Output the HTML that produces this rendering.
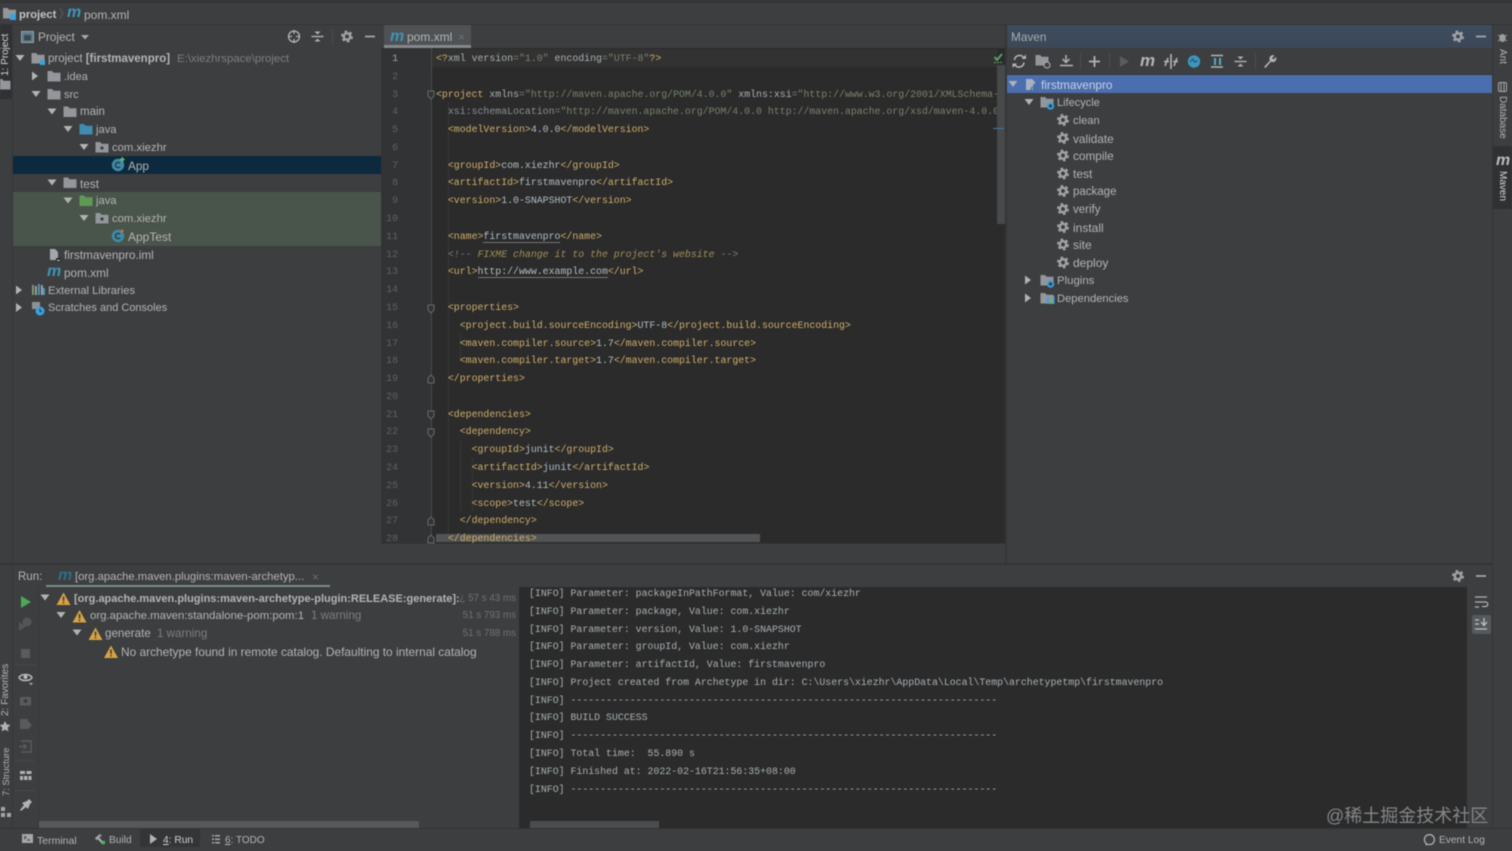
<!DOCTYPE html>
<html><head><meta charset="utf-8"><title>pom.xml</title>
<style>
html,body{margin:0;padding:0;background:#3c3e40;width:1512px;height:851px;overflow:hidden}
#r{position:absolute;left:0;top:0;width:1512px;height:851px;overflow:hidden;filter:blur(.45px);font-family:"Liberation Sans",sans-serif;font-size:11.8px;color:#b4b4b4;background:#3c3e40}
.b{position:absolute}
.t{position:absolute;white-space:pre;line-height:16px;height:16px;margin-top:.6px}
.g{color:#7c7e80}
.w{color:#d5d5d5}
.m{position:absolute;font:italic bold 16px/16px "Liberation Sans",sans-serif;color:#3f94b5;letter-spacing:-.5px}
pre{position:absolute;margin:0;font-family:"Liberation Mono",monospace;font-size:9.89px;line-height:17.78px;white-space:pre}
i{font-style:normal;color:#cfae6b}
s{text-decoration:none;color:#77836d}
u{text-decoration:none;color:#a9b0b5}
em{color:#7d7d7d}
.v{position:absolute;writing-mode:vertical-rl;white-space:pre;font-size:10px;line-height:12px}
.r180{transform:rotate(180deg)}
svg{position:absolute;left:0;top:0}
</style></head><body><div id="r">

<!-- chrome backgrounds -->
<div class="b" style="left:0;top:0;width:1512px;height:3px;background:#333537"></div>
<div class="b" style="left:0;top:24px;width:1512px;height:1px;background:#323436"></div>
<div class="b" style="left:0;top:25px;width:12px;height:74px;background:#2f3133"></div>
<div class="b" style="left:12px;top:25px;width:1px;height:803px;background:#353739"></div>

<!-- project tree -->
<div class="b" style="left:13px;top:156px;width:368px;height:18px;background:#0d293e"></div>
<div class="b" style="left:13px;top:192px;width:368px;height:54px;background:#49544a"></div>

<!-- editor -->
<div class="b" style="left:384px;top:25px;width:87px;height:20px;background:#4e5254"></div>
<div class="b" style="left:384px;top:45px;width:87px;height:3px;background:#85888a"></div>
<div class="b" style="left:381px;top:48px;width:50px;height:495px;background:#313335"></div>
<div class="b" style="left:431px;top:48px;width:575px;height:495px;background:#2b2b2b"></div>
<div class="b" style="left:431px;top:49px;width:567px;height:18px;background:#323232"></div>
<div class="b" style="left:431px;top:48px;width:1px;height:495px;background:#47494b"></div>
<div class="b" style="left:448px;top:102px;width:1px;height:441px;background:#363636"></div>
<div class="b" style="left:460px;top:332px;width:1px;height:30px;background:#363636"></div>
<div class="b" style="left:460px;top:440px;width:1px;height:72px;background:#363636"></div>
<div class="b" style="left:472px;top:458px;width:1px;height:54px;background:#363636"></div>
<div class="b" style="left:436px;top:534px;width:324px;height:8px;background:#525456"></div>
<pre style="left:381px;top:50px;width:17px;height:493px;overflow:hidden;text-align:right;color:#5f6264"><span style="color:#a4a4a4">1</span>
2
3
4
5
6
7
8
9
10
11
12
13
14
15
16
17
18
19
20
21
22
23
24
25
26
27
28</pre>
<pre style="left:436px;top:50px;width:569px;height:493px;overflow:hidden;color:#b3bcc4"><i>&lt;?</i><u>xml version</u><s>="1.0"</s> <u>encoding</u><s>="UTF-8"</s><i>?&gt;</i>

<i>&lt;project</i> <u>xmlns</u><s>="http://maven.apache.org/POM/4.0.0"</s> <u>xmlns:xsi</u><s>="http://www.w3.org/2001/XMLSchema-instance"</s>
  <u style="color:#8b9094">xsi:schemaLocation</u><s>="http://maven.apache.org/POM/4.0.0 http://maven.apache.org/xsd/maven-4.0.0.xsd"</s><i>&gt;</i>
  <i>&lt;modelVersion&gt;</i>4.0.0<i>&lt;/modelVersion&gt;</i>

  <i>&lt;groupId&gt;</i>com.xiezhr<i>&lt;/groupId&gt;</i>
  <i>&lt;artifactId&gt;</i>firstmavenpro<i>&lt;/artifactId&gt;</i>
  <i>&lt;version&gt;</i>1.0-SNAPSHOT<i>&lt;/version&gt;</i>

  <i>&lt;name&gt;</i><span style="border-bottom:1px solid #777">firstmavenpro</span><i>&lt;/name&gt;</i>
  <em>&lt;!-- </em><em style="font-style:italic;color:#a38f5a">FIXME change it to the project's website</em><em> --&gt;</em>
  <i>&lt;url&gt;</i><span style="border-bottom:1px solid #777">http://www.example.com</span><i>&lt;/url&gt;</i>

  <i>&lt;properties&gt;</i>
    <i>&lt;project.build.sourceEncoding&gt;</i>UTF-8<i>&lt;/project.build.sourceEncoding&gt;</i>
    <i>&lt;maven.compiler.source&gt;</i>1.7<i>&lt;/maven.compiler.source&gt;</i>
    <i>&lt;maven.compiler.target&gt;</i>1.7<i>&lt;/maven.compiler.target&gt;</i>
  <i>&lt;/properties&gt;</i>

  <i>&lt;dependencies&gt;</i>
    <i>&lt;dependency&gt;</i>
      <i>&lt;groupId&gt;</i>junit<i>&lt;/groupId&gt;</i>
      <i>&lt;artifactId&gt;</i>junit<i>&lt;/artifactId&gt;</i>
      <i>&lt;version&gt;</i>4.11<i>&lt;/version&gt;</i>
      <i>&lt;scope&gt;</i>test<i>&lt;/scope&gt;</i>
    <i>&lt;/dependency&gt;</i>
  <i>&lt;/dependencies&gt;</i></pre>
<div class="b" style="left:997px;top:65px;width:8px;height:159px;background:#47494b"></div>
<div class="b" style="left:993px;top:128px;width:11px;height:1px;background:#3f7e9e"></div>
<div class="b" style="left:381px;top:543px;width:625px;height:1px;background:#333537"></div>

<!-- splitter + maven -->
<div class="b" style="left:1005px;top:25px;width:2px;height:538px;background:#333537"></div>
<div class="b" style="left:1007px;top:25px;width:485px;height:23px;background:linear-gradient(#3e4c5e,#3c4858)"></div>
<div class="b" style="left:1007px;top:74px;width:485px;height:1px;background:#333537"></div>
<div class="b" style="left:1007px;top:75px;width:485px;height:18px;background:#4b6eaf"></div>
<div class="b" style="left:1492px;top:25px;width:1px;height:803px;background:#333537"></div>
<div class="b" style="left:1493px;top:146px;width:19px;height:63px;background:#2f3133"></div>

<!-- run panel -->
<div class="b" style="left:0;top:563px;width:1492px;height:2px;background:#333537"></div>
<div class="b" style="left:46px;top:585px;width:284px;height:2px;background:#7c8e8e"></div>
<div class="b" style="left:519px;top:587px;width:948px;height:241px;background:#2b2b2b"></div>
<div class="b" style="left:38px;top:587px;width:1px;height:241px;background:#37393b"></div>
<pre style="left:529px;top:585px;width:938px;height:235px;overflow:hidden;color:#a9b0b5">[INFO] Parameter: packageInPathFormat, Value: com/xiezhr
[INFO] Parameter: package, Value: com.xiezhr
[INFO] Parameter: version, Value: 1.0-SNAPSHOT
[INFO] Parameter: groupId, Value: com.xiezhr
[INFO] Parameter: artifactId, Value: firstmavenpro
[INFO] Project created from Archetype in dir: C:\Users\xiezhr\AppData\Local\Temp\archetypetmp\firstmavenpro
[INFO] ------------------------------------------------------------------------
[INFO] BUILD SUCCESS
[INFO] ------------------------------------------------------------------------
[INFO] Total time:  55.890 s
[INFO] Finished at: 2022-02-16T21:56:35+08:00
[INFO] ------------------------------------------------------------------------</pre>
<div class="b" style="left:39px;top:821px;width:380px;height:7px;background:#56585a"></div>
<div class="b" style="left:530px;top:821px;width:129px;height:7px;background:#4a4c4e"></div>
<div class="b" style="left:1472px;top:615px;width:19px;height:19px;background:#55595c;border-radius:2px"></div>

<!-- status -->
<div class="b" style="left:0;top:828px;width:1512px;height:1px;background:#323436"></div>
<div class="b" style="left:140px;top:829px;width:60px;height:18px;background:#333537"></div>

<!-- icons -->
<svg width="1512" height="851" viewBox="0 0 1512 851">
<defs>
<path id="f" d="M-6.500-5h4.600l1.400 1.800h7v8.700h-13z" fill="#93969a"/>
<path id="dn" d="M-4.500-3h9l-4.500 6z" fill="#b2b2b2"/>
<path id="rt" d="M-3-4.500v9l6-4.500z" fill="#b2b2b2"/>
<g id="gear"><circle r="3.200" fill="none" stroke="#a0a3a6" stroke-width="2.500"/><circle r="5" fill="none" stroke="#a0a3a6" stroke-width="2" stroke-dasharray="2.600 2.630"/></g>
<g id="warn"><path d="M0-6.500l7 12.500h-14z" fill="#d9a343"/><path d="M-.8-2.500h1.600v4.500h-1.600zM-.8 3h1.600v1.500h-1.600z" fill="#3c3f41"/></g>
<g id="pk"><use href="#f"/><circle cx="0" cy="1" r="1.600" fill="#3c3f41"/></g>
<g id="cls"><circle r="6.200" fill="#3e8ba8"/><path d="M2-1.700a2.600 2.600 0 1 0 0 3.400" fill="none" stroke="#2f3b44" stroke-width="1.500"/></g>
<path id="minus" d="M-5 0h10" stroke="#aeb0b2" stroke-width="1.600"/>
<g id="coll"><path d="M-6 0h12" stroke="#aeb0b2" stroke-width="1.400"/><path d="M-3-5h6l-3 3zM-3 5h6l-3-3z" fill="#aeb0b2"/></g>
</defs>

<!-- breadcrumb -->
<use href="#f" x="9.500" y="13"/><rect x="10" y="14" width="6" height="6" fill="#3aa2de"/>
<path d="M60 8.500l3 5-3 5" fill="none" stroke="#5b5e60"/>

<!-- side stripe -->
<use href="#f" x="4" y="84"/>
<path d="M5 721l1.700 3.500 3.800.5-2.800 2.600.7 3.800-3.400-1.800-3.400 1.800.7-3.800L-.5 725l3.800-.5z" fill="#b2b2b2"/>
<path d="M1 807h4v4H1zM1 813h4v4H1zM7 813h4v4H7z" fill="#a4a6a8"/>

<!-- project header -->
<rect x="21.500" y="31.500" width="12" height="11" fill="#5d7d8b" stroke="#8fa0a8"/><rect x="24" y="35" width="7" height="5.500" fill="#3c4a50"/>
<path d="M81 35h8l-4 4.500z" fill="#a8a8a8"/>
<g fill="none" stroke="#b0b2b4" stroke-width="1.300"><circle cx="294" cy="36.500" r="5.500"/><path d="M294 30v4M294 39v4M288 36.500h4M296 36.500h4"/></g>
<use href="#coll" x="317.500" y="36.500"/>
<rect x="332" y="29" width="1" height="15" fill="#4b4d4f"/>
<use href="#gear" x="347" y="36.500"/>
<use href="#minus" x="370" y="36.500"/>

<!-- project tree icons -->
<use href="#dn" x="20" y="58"/><use href="#rt" x="35" y="76"/><use href="#dn" x="36" y="94"/><use href="#dn" x="52" y="111.500"/><use href="#dn" x="68" y="129"/><use href="#dn" x="84" y="147"/>
<use href="#dn" x="52" y="182.500"/><use href="#dn" x="68" y="200.500"/><use href="#dn" x="84" y="218"/><use href="#rt" x="19" y="290"/><use href="#rt" x="19" y="307.500"/>
<use href="#f" x="38" y="58"/><rect x="40" y="60" width="5" height="5" fill="#3aa2de"/>
<use href="#f" x="54" y="76"/><use href="#f" x="54" y="94"/><use href="#f" x="70" y="111.500"/>
<path d="M79.500 124h4.600l1.400 1.800h7v8.700h-13z" fill="#3f8cb0"/>
<use href="#pk" x="102" y="147"/>
<use href="#cls" x="118" y="165"/><path d="M120 158.500h1.500v-2l3.500 3-3.500 3v-2H120z" fill="#5fb865"/>
<use href="#f" x="70" y="182.500"/>
<path d="M79.500 195.500h4.600l1.400 1.800h7v8.700h-13z" fill="#5f9a55"/>
<use href="#pk" x="102" y="218"/>
<use href="#cls" x="118" y="236"/><circle cx="122" cy="231" r="1.500" fill="#d5683c"/>
<path d="M50 249h5l3 3v8h-8z" fill="#a5a8ab"/><rect x="56" y="258" width="5" height="4" fill="#2b2b2b"/><rect x="57" y="260" width="3" height="1" fill="#ccc"/>
<g fill="#8aa06f"><rect x="32" y="285" width="1.800" height="10"/></g><g fill="#a6a9ac"><rect x="35" y="286" width="1.800" height="9"/><rect x="41" y="285" width="1.800" height="10"/></g><g fill="#4f9cc4"><rect x="38" y="284" width="1.800" height="11"/><rect x="43" y="288" width="1.800" height="7"/></g>
<rect x="32" y="302" width="8" height="7" fill="#8f9295"/><circle cx="40" cy="311" r="4.500" fill="#3aa2de"/><path d="M40 308.500v3h2" stroke="#23394a" fill="none"/>

<!-- editor icons -->
<path d="M994.500 57l2.500 3 5-6" fill="none" stroke="#59a869" stroke-width="1.800"/>
<path d="M994 62.500h9" stroke="#59a869" stroke-dasharray="2 1"/>
<g fill="#313335" stroke="#66696b"><path d="M428 91h6v5l-3 3-3-3z"/><path d="M428 305h6v5l-3 3-3-3z"/><path d="M428 383h6v-5l-3-3-3 3z"/><path d="M428 411h6v5l-3 3-3-3z"/><path d="M428 429h6v5l-3 3-3-3z"/><path d="M428 525h6v-5l-3-3-3 3z"/><path d="M428 543h6v-5l-3-3-3 3z"/></g>

<!-- maven header -->
<use href="#gear" x="1458" y="36.500"/><use href="#minus" x="1481" y="36.500"/>
<!-- maven toolbar -->
<g fill="none" stroke="#b2b4b6" stroke-width="1.500"><path d="M1014.500 60a5 5 0 0 1 9-2.500M1024 62.500a5 5 0 0 1-9 2.500"/></g><path d="M1021.500 59h4.500v-4.500zM1017 63.500h-4.500v4.500z" fill="#b2b4b6"/>
<use href="#f" x="1042" y="60"/><circle cx="1047" cy="65" r="3" fill="#3c3f41" stroke="#b2b4b6"/>
<path d="M1066 55v7M1062.500 59l3.500 3.500 3.500-3.500" fill="none" stroke="#b2b4b6" stroke-width="1.500"/><path d="M1060 65.500h13" stroke="#b2b4b6" stroke-width="1.500"/>
<rect x="1080" y="53" width="1" height="16" fill="#4b4d4f"/>
<path d="M1094.500 56v11M1089 61.500h11" stroke="#b2b4b6" stroke-width="1.800"/>
<rect x="1109" y="53" width="1" height="16" fill="#4b4d4f"/>
<path d="M1120 56v11l9-5.500z" fill="#5a5d5f"/>
<path d="M1171 54v15M1165 66l3-8M1174 66l3-8" stroke="#b2b4b6" stroke-width="1.600" fill="none"/><path d="M1164 61.500h5M1173 61.500h5" stroke="#b2b4b6" stroke-width="1.400"/>
<circle cx="1194" cy="61.500" r="6.200" fill="#3e95bd"/><path d="M1190 62l3-3 1.500 3 3-1" stroke="#24566e" fill="none" stroke-width="1.200"/>
<path d="M1211 55.500h12M1211 67h12" stroke="#b2b4b6" stroke-width="1.600"/><path d="M1214 58h2v7h-2zM1219 58h2v7h-2z" fill="#5ea9c7"/>
<use href="#coll" x="1240.500" y="61.500"/>
<rect x="1255" y="53" width="1" height="16" fill="#4b4d4f"/>
<path d="M1264 67l6-6.500a3.500 3.500 0 0 1 4.500-5l-2.500 2.500 1.500 1.500 2.500-2.500a3.500 3.500 0 0 1-5 4.500l-5.500 6.500z" fill="#b2b4b6"/>

<!-- maven tree -->
<use href="#dn" x="1013" y="84"/>
<path d="M1026 79h6l3 3v2h-2v6h-7z" fill="#a9b2c4"/>
<use href="#dn" x="1029" y="102"/>
<use href="#f" x="1047" y="102"/><circle cx="1050.500" cy="106" r="2.700" fill="#3c3f41" stroke="#3aa2de" stroke-width="2"/>
<use href="#gear" x="1063" y="120"/><use href="#gear" x="1063" y="138"/><use href="#gear" x="1063" y="155.500"/><use href="#gear" x="1063" y="173.500"/><use href="#gear" x="1063" y="191"/><use href="#gear" x="1063" y="209"/><use href="#gear" x="1063" y="227"/><use href="#gear" x="1063" y="244.500"/><use href="#gear" x="1063" y="262.500"/>
<use href="#rt" x="1028" y="280"/><use href="#rt" x="1028" y="298"/>
<use href="#f" x="1047" y="280"/><circle cx="1050.500" cy="284" r="2.700" fill="#3c3f41" stroke="#3aa2de" stroke-width="2"/>
<use href="#f" x="1047" y="298"/><path d="M1047 297h2v7h-2z" fill="#3aa2de"/><path d="M1050 299h2v5h-2z" fill="#72b35f"/><path d="M1053 296h1.500v8H1053z" fill="#3aa2de"/>

<!-- right stripe icons -->
<ellipse cx="1502.500" cy="38" rx="3.200" ry="4" fill="#9a9c9e"/><path d="M1498 35l9 6M1507 35l-9 6" stroke="#9a9c9e"/>
<g fill="none" stroke="#a8aaac"><rect x="1498.500" y="82.500" width="8" height="9" rx="1.500"/><path d="M1501 83v8M1504 83v8"/></g>

<!-- run toolbar -->
<path d="M21 596v12l10-6z" fill="#4ea75b"/>
<path d="M19 631v-9l7 4.500z" fill="#535658"/><circle cx="27" cy="622" r="4.500" fill="#535658"/>
<rect x="21" y="649" width="9" height="9" fill="#595c5e"/>
<rect x="15" y="664" width="21" height="1" fill="#47494b"/>
<path d="M19 677.500c2-4 11-4 13 0-2 4-11 4-13 0z" fill="none" stroke="#b8babc" stroke-width="1.500"/><circle cx="25.500" cy="677" r="2" fill="#b8babc"/><path d="M29 683h4l-2 2z" fill="#b8babc"/>
<rect x="20" y="697" width="11" height="8.500" rx="1" fill="#595c5e"/><circle cx="25.500" cy="701" r="2" fill="#3c3f41"/>
<path d="M20 719h8v10h-8zM28 721l4 4-4 4z" fill="#595c5e"/>
<path d="M21 741h10v11H21M19 746.500h7M23.500 744l3 2.500-3 2.500" fill="none" stroke="#595c5e" stroke-width="1.400"/>
<rect x="15" y="760" width="19" height="1" fill="#47494b"/>
<path d="M20 771h5v3h-5zM26.500 771h5v3h-5zM20 776h3v4h-3zM24 776h3.500v4H24zM28.500 776h3v4h-3z" fill="#b0b2b4"/>
<rect x="15" y="790" width="19" height="1" fill="#47494b"/>
<path d="M20 810l4-5-2-2 5-2 2-2 3 3-2 2-2 5-2-2-5 4z" fill="#b0b2b4"/>

<!-- run tree -->
<use href="#dn" x="45" y="597.500"/><use href="#dn" x="61" y="615"/><use href="#dn" x="77" y="632.500"/>
<use href="#warn" x="63.500" y="599"/><use href="#warn" x="79.500" y="616.500"/><use href="#warn" x="95.500" y="634"/><use href="#warn" x="111" y="652"/>

<!-- run right -->
<use href="#gear" x="1458" y="576"/><use href="#minus" x="1481" y="576"/>
<path d="M1475 597h12M1475 602h10.500a2 2 0 0 1 0 4.500h-3.500M1475 607h4" fill="none" stroke="#b0b2b4" stroke-width="1.300"/>
<path d="M1475 629h12M1475 620h4M1475 624h4M1484 618v7M1481 622l3 3.500 3-3.500" fill="none" stroke="#c0c2c4" stroke-width="1.300"/>

<!-- status icons -->
<rect x="22" y="834" width="11" height="9" fill="#a5a8ab"/><path d="M24 836l2 1.500-2 1.500M27 840h3" stroke="#3c3f41" fill="none"/>
<path d="M95 838l5-4 2 2-3 1 5 6-1.500 1.500-5-5.500-1 1.500z" fill="#a5a8ab"/><circle cx="103.500" cy="842.500" r="1.700" fill="#39c24a"/>
<path d="M150 834v10l7-5z" fill="#b0b2b4"/>
<path d="M212 835h2v1.500h-2zM212 838.500h2v1.500h-2zM212 842h2v1.500h-2zM215 835h5v1.500h-5zM215 838.500h5v1.500h-5zM215 842h5v1.500h-5z" fill="#a5a8ab"/>
<path d="M1427 844a5 5 0 1 1 3.500 .5h-5" fill="none" stroke="#b0b2b4" stroke-width="1.300"/>
</svg>

<!-- breadcrumb text -->
<div class="t" style="left:19px;top:6px;font-weight:bold;font-size:11.200px;color:#c4c4c4">project</div>
<div class="m" style="left:67px;top:5px">m</div>
<div class="t" style="left:84px;top:6px;font-size:12px">pom.xml</div>

<!-- project panel -->
<div class="t" style="left:38px;top:28.500px">Project</div>
<div class="t" style="left:48px;top:50px;font-size:11.500px">project <b>[firstmavenpro]</b></div>
<div class="t g" style="left:177px;top:50px;font-size:11.400px">E:\xiezhrspace\project</div>
<div class="t" style="left:64px;top:68px;font-size:11px">.idea</div>
<div class="t" style="left:64px;top:86px;font-size:11px">src</div>
<div class="t" style="left:80px;top:103.500px;font-size:11.500px">main</div>
<div class="t" style="left:96px;top:121px;font-size:11.200px">java</div>
<div class="t" style="left:112px;top:139px;font-size:11.300px">com.xiezhr</div>
<div class="t" style="left:128px;top:157px">App</div>
<div class="t" style="left:80px;top:175px">test</div>
<div class="t" style="left:96px;top:192.500px;font-size:11.200px">java</div>
<div class="t" style="left:112px;top:210px;font-size:11.300px">com.xiezhr</div>
<div class="t" style="left:128px;top:228px;font-size:12px">AppTest</div>
<div class="t" style="left:64px;top:246px">firstmavenpro.iml</div>
<div class="m" style="left:47px;top:264px">m</div>
<div class="t" style="left:64px;top:264px">pom.xml</div>
<div class="t" style="left:48px;top:282px;font-size:11.200px">External Libraries</div>
<div class="t" style="left:48px;top:299.500px;font-size:11px">Scratches and Consoles</div>

<!-- tab -->
<div class="m" style="left:390px;top:28.500px">m</div>
<div class="t" style="left:407px;top:28.500px;font-size:12px">pom.xml</div>
<div class="t" style="left:458px;top:28.500px;color:#6c6f71">×</div>

<!-- maven -->
<div class="t" style="left:1011px;top:28.500px;color:#a8acb0">Maven</div>
<div class="m" style="left:1140px;top:53px;color:#b2b4b6;font-size:17px">m</div>
<div class="t" style="left:1041px;top:76px;color:#c9d2e4">firstmavenpro</div>
<div class="m" style="left:1030px;top:81px;font-size:9px;color:#3a6ea8">m</div>
<div class="t" style="left:1057px;top:94px;font-size:11px">Lifecycle</div>
<div class="t" style="left:1073px;top:112px;font-size:11.200px">clean</div>
<div class="t" style="left:1073px;top:130px">validate</div>
<div class="t" style="left:1073px;top:147.500px">compile</div>
<div class="t" style="left:1073px;top:165.500px;font-size:12px">test</div>
<div class="t" style="left:1073px;top:183px;font-size:11.500px">package</div>
<div class="t" style="left:1073px;top:201px;font-size:11.500px">verify</div>
<div class="t" style="left:1073px;top:219px;font-size:12px">install</div>
<div class="t" style="left:1073px;top:236.500px;font-size:12px">site</div>
<div class="t" style="left:1073px;top:254.500px;font-size:12px">deploy</div>
<div class="t" style="left:1057px;top:272px;font-size:11.400px">Plugins</div>
<div class="t" style="left:1057px;top:290px;font-size:11.200px">Dependencies</div>

<!-- run -->
<div class="t" style="left:18px;top:568px;font-size:11.500px">Run:</div>
<div class="m" style="left:58px;top:568px;color:#2f6d85">m</div>
<div class="t" style="left:75px;top:568px;font-size:11.300px">[org.apache.maven.plugins:maven-archetyp...</div>
<div class="t" style="left:312px;top:568px;color:#6c6f71">×</div>
<div class="t" style="left:74px;top:590px;font-weight:bold;font-size:11px">[org.apache.maven.plugins:maven-archetype-plugin:RELEASE:generate]:</div>
<div class="t" style="left:90px;top:607.500px;font-size:11.400px">org.apache.maven:standalone-pom:pom:1</div>
<div class="t g" style="left:311px;top:607.500px;font-size:11.600px">1 warning</div>
<div class="t" style="left:105px;top:625px;font-size:11.600px">generate</div>
<div class="t g" style="left:157px;top:625px;font-size:11.600px">1 warning</div>
<div class="t" style="left:121px;top:643px;font-size:11.900px">No archetype found in remote catalog. Defaulting to internal catalog</div>
<div class="t" style="right:996px;top:590px;font-size:9.800px;color:#6f7274">¿ 57 s 43 ms</div>
<div class="t" style="right:996px;top:607.500px;font-size:9.800px;color:#6f7274">51 s 793 ms</div>
<div class="t" style="right:996px;top:625px;font-size:9.800px;color:#6f7274">51 s 788 ms</div>

<!-- status -->
<div class="t" style="left:37px;top:832px;font-size:10.500px">Terminal</div>
<div class="t" style="left:109px;top:832px;font-size:10.200px">Build</div>
<div class="t" style="left:163px;top:832px;font-size:10.200px;color:#d0d0d0"><span style="text-decoration:underline">4</span>: Run</div>
<div class="t" style="left:225px;top:832px;font-size:10px"><span style="text-decoration:underline">6</span>: TODO</div>
<div class="t" style="left:1439px;top:832px;font-size:10.200px">Event Log</div>

<!-- vertical labels -->
<div class="v r180 w" style="left:0;top:32px;height:44px">1: Project</div>
<div class="v r180" style="left:0;top:664px;height:52px">2: Favorites</div>
<div class="v r180" style="left:0;top:750px;height:46px;font-size:9.400px">7: Structure</div>
<div class="v" style="left:1496px;top:49px;height:16px">Ant</div>
<div class="v" style="left:1496px;top:96px;height:42px">Database</div>
<div class="m" style="left:1496px;top:153px;color:#b8babc">m</div>
<div class="v w" style="left:1496px;top:171px;height:32px">Maven</div>

<!-- watermark -->
<div class="t" style="left:1326px;top:803px;height:24px;line-height:24px;font-family:'Liberation Sans','Noto Sans CJK SC',sans-serif;font-size:18px;color:#84878a">@稀土掘金技术社区</div>
</div></body></html>
